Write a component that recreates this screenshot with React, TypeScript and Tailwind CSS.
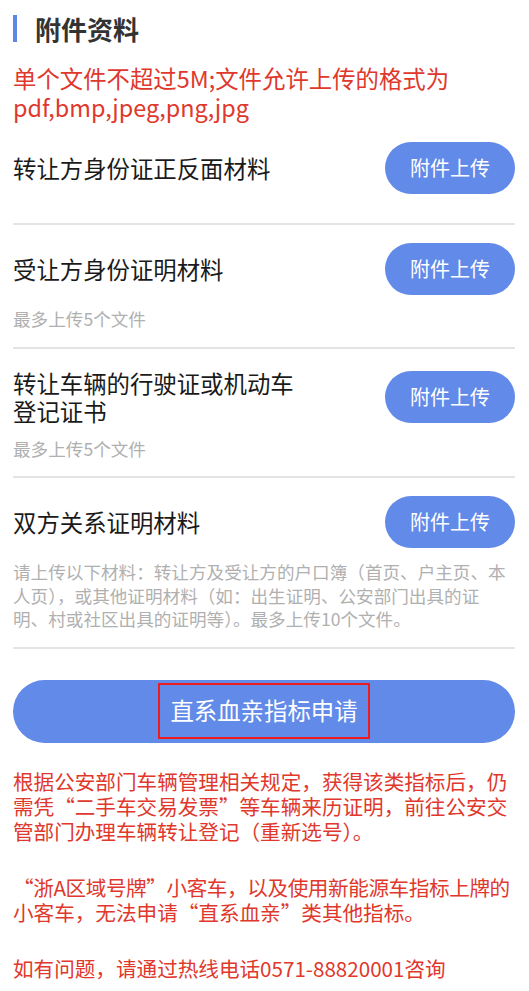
const FONT = "font-['Noto_Sans_CJK_SC','Noto_Sans',sans-serif]"

type Item = {
    title: string[]
    note?: string[]
    pad: string
}

const items: Item[] = [
    { title: ['转让方身份证正反面材料'], pad: 'pt-[20px] pb-[29px]' },
    { title: ['受让方身份证明材料'], note: ['最多上传5个文件'], pad: 'pt-[18px] pb-[16px]' },
    { title: ['转让车辆的行驶证或机动车', '登记证书'], note: ['最多上传5个文件'], pad: 'pt-[20px] pb-[16px]' },
    {
        title: ['双方关系证明材料'],
        note: [
            '请上传以下材料：转让方及受让方的户口簿（首页、户主页、本',
            '人页），或其他证明材料（如：出生证明、公安部门出具的证',
            '明、村或社区出具的证明等）。最多上传10个文件。',
        ],
        pad: 'pt-[18px] pb-[16px]',
    },
]

function UploadRow({ item }: { item: Item }) {
    return (
        <div className={`border-b-2 border-[#e4e4e4] ${item.pad}`}>
            <div className="flex items-center justify-between">
                <div className="text-[23.4px] leading-[28px] text-[#1a1a1a]">
                    {item.title.map((t) => (
                        <div key={t}>{t}</div>
                    ))}
                </div>
                <button className="w-[130px] h-[52px] shrink-0 rounded-full bg-[#628ae8] text-white text-[20px]">
                    附件上传
                </button>
            </div>
            {item.note && (
                <div className="mt-[12px] text-[17.6px] leading-[23.5px] text-[#b0b0b0]">
                    {item.note.map((n) => (
                        <div key={n} className="whitespace-nowrap">{n}</div>
                    ))}
                </div>
            )}
        </div>
    )
}

export default function App() {
    return (
        <div className={`${FONT} bg-white min-h-[991px] pl-[13px] pr-[14px] pt-[10px]`}>
            {/* Section title */}
            <div className="flex items-center gap-[18px] h-[36px]">
                <span className="w-[4px] h-[27px] bg-[#5e86ea]" />
                <h1 className="text-[26px] font-bold text-[#333]">附件资料</h1>
            </div>

            <p className="mt-[18px] text-[23.4px] leading-[29px] text-[#e0382c]">
                单个文件不超过5M;文件允许上传的格式为
                <br />
                pdf,bmp,jpeg,png,jpg
            </p>

            {items.map((item, i) => (
                <UploadRow key={i} item={item} />
            ))}

            <button className="mt-[31px] w-full h-[63px] rounded-full bg-[#628ae8] flex items-center justify-center">
                <span className="border-2 border-[#ee1c1c] px-[10px] h-[56px] flex items-center text-white text-[23.4px]">
                    直系血亲指标申请
                </span>
            </button>

            <div className="mt-[26px] text-[20.6px] leading-[25px] text-[#e0382c] space-y-[31px]">
                <p>根据公安部门车辆管理相关规定，获得该类指标后，仍需凭“二手车交易发票”等车辆来历证明，前往公安交管部门办理车辆转让登记（重新选号）。</p>
                <p>
                    <span className="whitespace-nowrap tracking-[-0.4px]">“浙A区域号牌”小客车，以及使用新能源车指标上牌的</span>
                    <br />
                    小客车，无法申请“直系血亲”类其他指标。
                </p>
                <p>如有问题，请通过热线电话0571-88820001咨询</p>
            </div>
        </div>
    )
}
